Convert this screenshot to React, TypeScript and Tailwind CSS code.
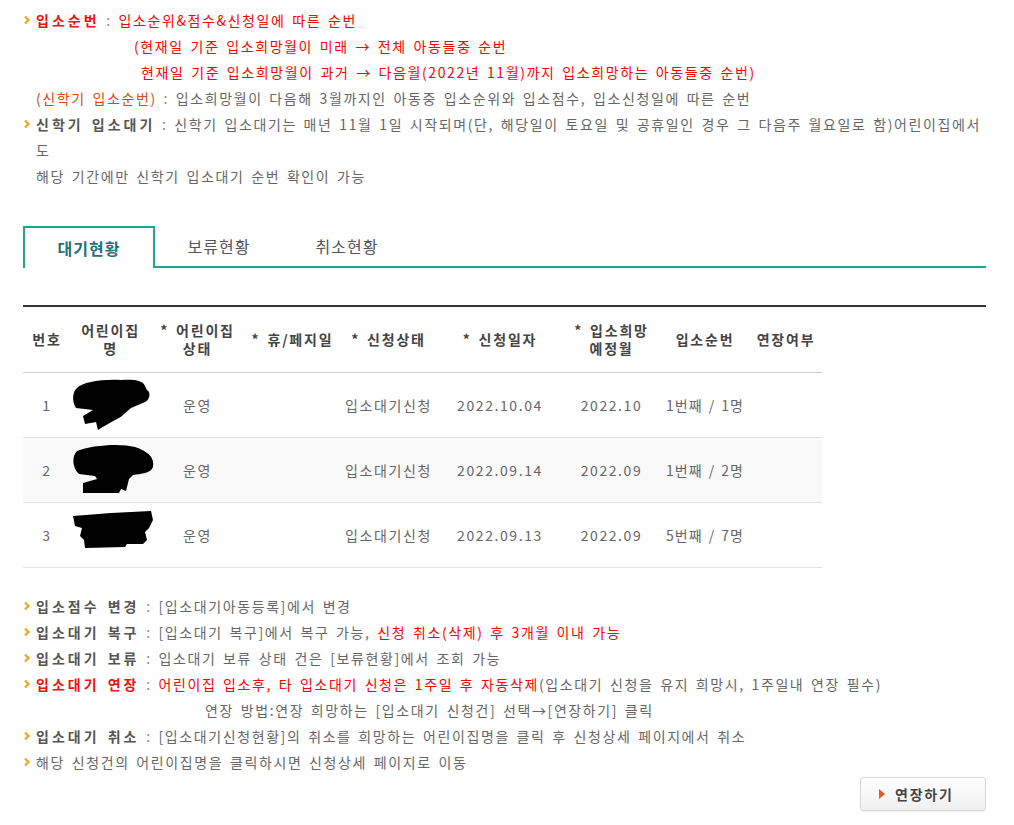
import React from "react";

const RED = "text-[#ff0000]";
const B = "font-bold tracking-[3px]";

function Bullet() {
  return (
    <svg width="13" height="26" viewBox="0 0 13 26" className="shrink-0">
      <path d="M2 9.5 L5.5 13 L2 16.5" fill="none" stroke="#f5a01e" strokeWidth="2.2" />
    </svg>
  );
}

function Row({ children, bullet = true, indent }: { children: React.ReactNode; bullet?: boolean; indent?: string }) {
  return (
    <div className={`flex ${indent ?? ""}`}>
      {bullet ? <Bullet /> : null}
      <div className="flex-1 min-w-0">{children}</div>
    </div>
  );
}

function Sep() {
  return <span className="text-[#888]"> : </span>;
}

const blobs = [
  "M6 10 C12 4 30 1 50 2 C62 1 72 2 74 8 L76 12 C80 14 79 22 74 24 L60 30 C55 34 50 40 44 42 L30 50 L27 52 L25 44 L14 46 L12 38 L22 32 L5 30 C1 24 1 14 6 10 Z",
  "M6 8 C20 2 50 0 64 4 C76 8 84 14 82 24 C80 30 70 31 62 32 L58 36 L57 40 L55 48 L50 46 L48 50 L12 50 L12 40 L26 36 L24 33 L8 31 C2 26 0 14 6 8 Z",
  "M2 8 L40 5 L80 3 L82 12 L78 20 L74 24 L76 32 L72 36 L56 36 L54 39 L14 40 L13 32 L9 28 L11 20 L4 18 Z",
];

function Blob({ d }: { d: string }) {
  return (
    <svg width="84" height="54" viewBox="0 0 84 54" className="block mx-auto">
      <path d={d} fill="#000" />
    </svg>
  );
}

const rows = [
  { no: 1, date: "2022.10.04", month: "2022.10", order: "1번째 / 1명" },
  { no: 2, date: "2022.09.14", month: "2022.09", order: "1번째 / 2명" },
  { no: 3, date: "2022.09.13", month: "2022.09", order: "5번째 / 7명" },
];

export default function App() {
  return (
    <div className="font-['Noto_Sans_CJK_KR',sans-serif] text-[14px] leading-[26px] tracking-[1.6px] [word-spacing:2px] text-[#666] bg-white pl-[23px] pr-[28px] pt-[7px] pb-[13px]">
      <div>
        <Row>
          <b className={`${B} text-[#ee1111]`}>입소순번</b>
          <Sep />
          <span className={RED}>입소순위&amp;점수&amp;신청일에 따른 순번</span>
        </Row>
        <div className={`pl-[111px] ${RED}`}>(현재일 기준 입소희망월이 미래 → 전체 아동들중 순번</div>
        <div className={`pl-[118px] ${RED}`}>현재일 기준 입소희망월이 과거 → 다음월(2022년 11월)까지 입소희망하는 아동들중 순번)</div>
        <div className="pl-[13px]">
          <span className="text-[#d24b0f]">(신학기 입소순번)</span>
          <Sep />
          입소희망월이 다음해 3월까지인 아동중 입소순위와 입소점수, 입소신청일에 따른 순번
        </div>
        <Row>
          <b className={`${B} text-[#555]`}>신학기 입소대기</b>
          <Sep />
          신학기 입소대기는 매년 11월 1일 시작되며(단, 해당일이 토요일 및 공휴일인 경우 그 다음주 월요일로 함)어린이집에서
          <br />도
        </Row>
        <div className="pl-[13px]">해당 기간에만 신학기 입소대기 순번 확인이 가능</div>
      </div>

      <div className="mt-[37px] flex border-b-2 border-[#1fa39a] h-[42px]">
        <div className="w-[132px] -mb-[2px] border-2 border-b-0 border-[#1fa39a] bg-white flex items-center justify-center text-[16px] font-bold text-[#24707a] tracking-[1px]">
          대기현황
        </div>
        <div className="w-[128px] flex items-center justify-center text-[16px] text-[#555] tracking-[1px]">보류현황</div>
        <div className="w-[128px] flex items-center justify-center text-[16px] text-[#555] tracking-[1px]">취소현황</div>
      </div>

      <div className="mt-[37px] border-t-2 border-[#333]">
        <table className="w-[799px] border-collapse table-fixed">
          <colgroup>
            <col className="w-[48px]" />
            <col className="w-[79px]" />
            <col className="w-[95px]" />
            <col className="w-[95px]" />
            <col className="w-[97px]" />
            <col className="w-[126px]" />
            <col className="w-[97px]" />
            <col className="w-[90px]" />
            <col className="w-[72px]" />
          </colgroup>
          <thead>
            <tr className="h-[65px] border-b border-[#cfcfcf] text-[#444] font-bold leading-[18px] tracking-[1.8px]">
              <th>번호</th>
              <th>어린이집<br />명</th>
              <th>* 어린이집<br />상태</th>
              <th>* 휴/페지일</th>
              <th>* 신청상태</th>
              <th>* 신청일자</th>
              <th>* 입소희망<br />예정월</th>
              <th>입소순번</th>
              <th>연장여부</th>
            </tr>
          </thead>
          <tbody>
            {rows.map((r, i) => (
              <tr key={r.no} className={`h-[65px] border-b border-[#e3e3e3] text-center ${i === 1 ? "bg-[#f9f9f9]" : ""}`}>
                <td>{r.no}</td>
                <td><Blob d={blobs[i]} /></td>
                <td>운영</td>
                <td></td>
                <td>입소대기신청</td>
                <td>{r.date}</td>
                <td>{r.month}</td>
                <td className="whitespace-nowrap tracking-[1px]">{r.order}</td>
                <td></td>
              </tr>
            ))}
          </tbody>
        </table>
      </div>

      <div className="mt-[25px]">
        <Row>
          <b className={`${B} text-[#555]`}>입소점수 변경</b>
          <Sep />
          [입소대기아동등록]에서 변경
        </Row>
        <Row>
          <b className={`${B} text-[#555]`}>입소대기 복구</b>
          <Sep />
          [입소대기 복구]에서 복구 가능, <span className={RED}>신청 취소(삭제) 후 3개월 이내 가능</span>
        </Row>
        <Row>
          <b className={`${B} text-[#555]`}>입소대기 보류</b>
          <Sep />
          입소대기 보류 상태 건은 [보류현황]에서 조회 가능
        </Row>
        <Row>
          <b className={`${B} text-[#ee1111]`}>입소대기 연장</b>
          <Sep />
          <span className={RED}>어린이집 입소후, 타 입소대기 신청은 1주일 후 자동삭제</span>(입소대기 신청을 유지 희망시, 1주일내 연장 필수)
        </Row>
        <div className="pl-[182px]">연장 방법:연장 희망하는 [입소대기 신청건] 선택→[연장하기] 클릭</div>
        <Row>
          <b className={`${B} text-[#555]`}>입소대기 취소</b>
          <Sep />
          [입소대기신청현황]의 취소를 희망하는 어린이집명을 클릭 후 신청상세 페이지에서 취소
        </Row>
        <Row>해당 신청건의 어린이집명을 클릭하시면 신청상세 페이지로 이동</Row>
      </div>

      <div className="flex justify-end mt-[2px]">
        <button className="w-[126px] h-[34px] rounded-[3px] border border-[#d6d6d6] bg-gradient-to-b from-white to-[#f0f0f0] shadow-[0_1px_1px_rgba(0,0,0,0.06)] flex items-center pl-[18px] gap-[10px] text-[#444] font-bold tracking-[1.8px]">
          <svg width="6" height="10" viewBox="0 0 6 10">
            <path d="M0 0 L6 5 L0 10 Z" fill="#e8592a" />
          </svg>
          연장하기
        </button>
      </div>
    </div>
  );
}
